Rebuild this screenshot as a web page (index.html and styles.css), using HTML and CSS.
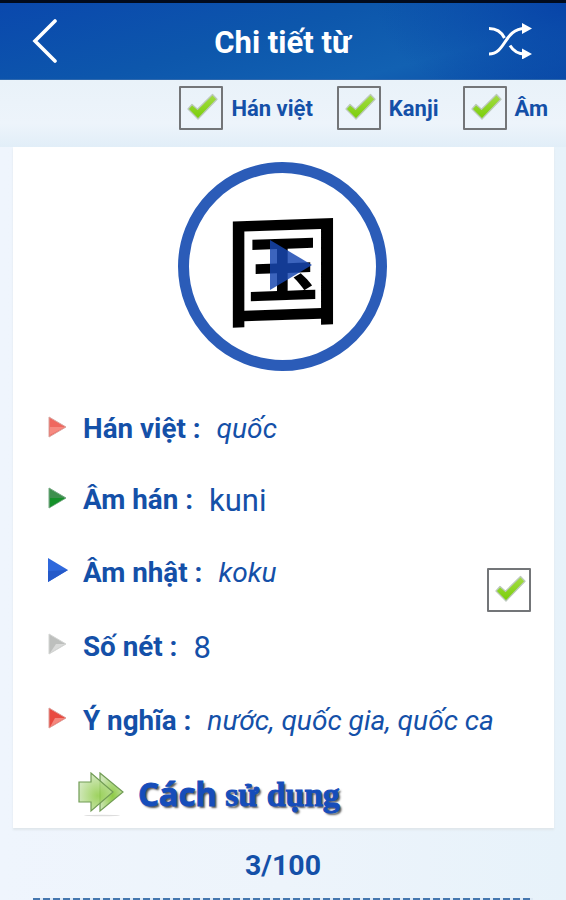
FILE: index.html
```html
<!DOCTYPE html>
<html lang="vi">
<head>
    <meta charset="UTF-8">
    <meta name="viewport" content="width=device-width, initial-scale=1.0">
    <title>Chi tiết từ</title>
    <link rel="stylesheet" href="styles.css">
</head>
<body>
    <svg width="0" height="0" class="defs">
        <defs>
            <linearGradient id="tick" x1="0" y1="0" x2="0" y2="1">
                <stop offset="0" stop-color="#a4dc45"/>
                <stop offset="1" stop-color="#79ce08"/>
            </linearGradient>
            <radialGradient id="go" cx="55%" cy="60%" r="60%">
                <stop offset="0" stop-color="#8ecb45"/>
                <stop offset="1" stop-color="#cce5b5"/>
            </radialGradient>
            <symbol id="check" viewBox="0 0 40 40">
                <path d="M7 21l4-4.500 5.500 4.700L31.500 6.500l4.500 4.800L17 31z" fill="url(#tick)" stroke="#bcc9bb" stroke-width="1.300" stroke-linejoin="round"/>
            </symbol>
        </defs>
    </svg>

    <header class="header">
        <svg class="back" width="26" height="44" viewBox="0 0 26 44"><path d="M23 2L3 22l20 20" fill="none" stroke="#fff" stroke-width="3.6" stroke-linecap="round"/></svg>
        <h1>Chi tiết từ</h1>
        <svg class="shuffle" width="44" height="36" viewBox="0 0 44 36">
            <g fill="none" stroke="#fff" stroke-width="3">
                <path d="M1 5.500c8 0 13 4.500 15.500 9.500M1 31c17 0 15-25.500 36-25.500M22 22.500c3 5 7 8.500 15 8.500"/>
            </g>
            <path d="M34 0l10 5.500L34 11zM34 25.500l10 5.500-10 5.500z" fill="#fff"/>
        </svg>
    </header>

    <div class="filters">
        <label class="filter"><span class="box"><svg><use href="#check"/></svg></span>Hán việt</label>
        <label class="filter"><span class="box"><svg><use href="#check"/></svg></span>Kanji</label>
        <label class="filter"><span class="box"><svg><use href="#check"/></svg></span>Âm</label>
    </div>

    <main class="card">
        <div class="kanji">
            <span class="char" lang="ja">国</span>
            <svg class="play" width="42" height="50" viewBox="0 0 42 50"><path d="M0 0l42 25L0 50z" fill="#1746b0" fill-opacity=".84"/></svg>
        </div>

        <div class="rows">
            <div class="row">
                <svg class="arrow" viewBox="0 0 20 24"><path d="M1 2l17 10L1 22z" fill="#ef685f" stroke="#d8a5a0"/><path d="M2 12h15L2 20z" fill="#f58a80"/></svg>
                <b>Hán việt :</b><i>quốc</i>
            </div>
            <div class="row">
                <svg class="arrow" viewBox="0 0 20 24"><path d="M1 2l17 10L1 22z" fill="#3d8f4d" stroke="#75a982"/><path d="M2 12l15 0L2 21z" fill="#15912a"/></svg>
                <b>Âm hán :</b><span class="value">kuni</span>
            </div>
            <div class="row tall">
                <svg class="arrow" viewBox="0 0 20 24"><path d="M0 0l20 12L0 24z" fill="#2f68dc"/><path d="M0 24V13l20-1z" fill="#2459c9"/></svg>
                <b>Âm nhật :</b><i>koku</i>
                <span class="box"><svg><use href="#check"/></svg></span>
            </div>
            <div class="row">
                <svg class="arrow" viewBox="0 0 20 24"><path d="M1 2l17 10L1 22z" fill="#bdbfbd" stroke="#d3d5d3"/><path d="M2 21l6-9h9z" fill="#d9dad9"/></svg>
                <b>Số nét :</b><span class="value">8</span>
            </div>
            <div class="row">
                <svg class="arrow" viewBox="0 0 20 24"><path d="M1 2l17 10L1 22z" fill="#e94a40" stroke="#dc9f9a"/><path d="M2 21l5-9h10z" fill="#f4877d"/></svg>
                <b>Ý nghĩa :</b><i>nước, quốc gia, quốc ca</i>
            </div>
        </div>

        <div class="usage">
            <svg width="47" height="46" viewBox="0 0 47 46">
                <ellipse cx="24" cy="43.500" rx="18" ry=".8" fill="#ddd"/>
                <g fill="url(#go)" stroke="#719c55" stroke-width="1.200">
                    <path d="M22 1l23 19-23 19z"/>
                    <path d="M1 10h12V1l22 19-22 19v-9H1z" fill-opacity=".85"/>
                </g>
            </svg>
            <span class="usage-text">Cách <span>sử dụng</span></span>
        </div>
    </main>

    <div class="counter">3/100</div>
    <div class="dashes"></div>
</body>
</html>
```

FILE: styles.css
```css
* { box-sizing: border-box; }
body { margin: 0; height: 900px; overflow: hidden; font-family: Roboto, sans-serif; color: #1450a8; background: linear-gradient(90deg, #eff5fd, #edf4fb 50%, #e7f2fa); }
.defs { display: block; }
.header { height: 80px; border-top: 3px solid #020b1d; display: flex; align-items: center; justify-content: space-between; padding: 0 34px 0 32px; background: radial-gradient(ellipse 190px 110px at 100% 0, #0844a8, transparent), linear-gradient(165deg, #0a48ad, #0d57ac 45%, #1261b2 75%, #0b4da8); border-bottom: 1px solid #2d68ae; }
.header h1 { margin: 3px 0 0 19px; color: #fff; font-size: 31px; font-weight: 700; line-height: 40px; }
.filters { height: 67px; padding: 6px 18px 0 0; display: flex; justify-content: flex-end; gap: 24px; background: linear-gradient(#e9f2f9, #edf4fb 65%, #e1eef8); }
.filter { display: flex; height: 44px; align-items: center; gap: 8px; font-size: 22px; font-weight: 700; }
.box { width: 44px; height: 44px; border: 2px solid #737578; border-radius: 1px; flex: none; }
.box svg { display: block; width: 40px; height: 40px; }
.card { height: 681px; margin: 0 12px 0 13px; padding-top: 15px; background: #fff; box-shadow: 0 2px 2px #dfe6eb; }
.kanji { position: relative; width: 209px; height: 209px; margin: 0 auto 0 165px; border: 11px solid #2b5cb8; border-radius: 50%; display: flex; align-items: center; justify-content: center; }
.char { font: 500 120px/118px "Noto Sans CJK JP", sans-serif; color: #000; transform: translateY(-3px) skewY(-2deg); }
.play { position: absolute; left: 81px; top: 67px; }
.rows { padding: 22px 23px 0 35px; }
.row { height: 71px; display: flex; align-items: center; }
.row:nth-child(n+4) { height: 74px; }
.row.tall { height: 74px; }
.arrow { width: 20px; height: 24px; margin: -4px 15px 0 0; }
.row b { font-size: 27.8px; font-weight: 700; margin-right: 16px; }
.row i { font-size: 28.1px; }
.value { font-size: 31px; margin-top: 2px; }
.row .box { margin: 35px 0 0 auto; }
.usage { display: flex; align-items: center; margin: 14px 0 0 65px; gap: 13px; }
.usage-text { font: 700 33px/46px "Open Sans", sans-serif; letter-spacing: -.2px; color: #164dba; -webkit-text-stroke: 1px #164dba; text-shadow: 2px 2px 2px #555; }
.usage-text span { font-family: "Liberation Serif", serif; font-size: 34px; }
.counter { height: 70px; line-height: 75px; text-align: center; font-size: 28.5px; font-weight: 700; }
.dashes { height: 2px; margin: 0 33px; background: repeating-linear-gradient(90deg, #4577af 0 7px, #dce8f4 7px 10px); }
```
